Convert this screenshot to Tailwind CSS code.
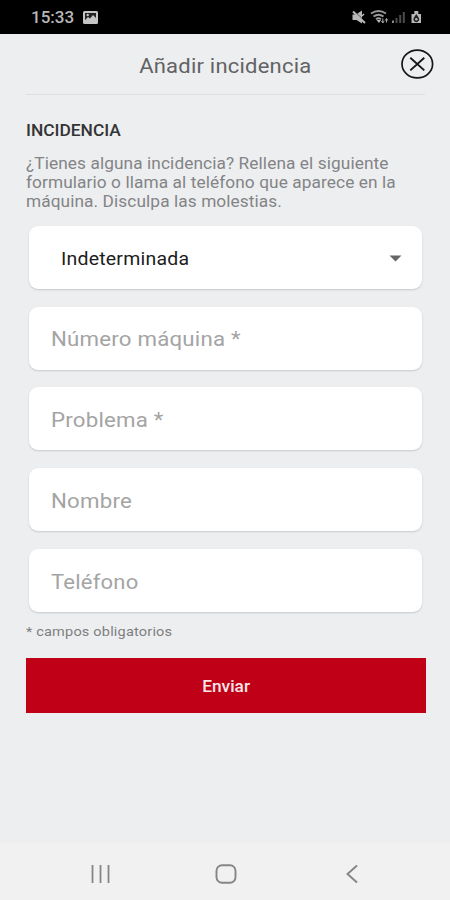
<!DOCTYPE html>
<html lang="es">
<head>
<meta charset="utf-8">
<title>Añadir incidencia</title>
<script src="https://cdn.jsdelivr.net/npm/@tailwindcss/browser@4"></script>
</head>
<body class="w-[450px] h-[900px] overflow-hidden bg-[#edeef0] font-['Roboto',sans-serif]">
<div class="flex h-[900px] flex-col">
  <header class="flex h-[34px] shrink-0 items-center bg-black pl-[31px] pr-[28px] text-[#b8b8b8]">
    <span class="w-[52px] text-[17px] leading-[20px] font-medium">15:33</span>
    <svg width="15" height="13" viewBox="0 0 15 13"><rect width="15" height="13" rx="1.5" fill="#c4c4c4"/><path d="M2 2h11v5l-3-3-3 3.500L5 6 2 9z" fill="#222"/><circle cx="4.700" cy="4" r="1.200" fill="#c4c4c4"/></svg>
    <svg class="ml-auto" width="71" height="16" viewBox="0 0 71 16" fill="#b8b8b8">
      <path d="M1.500 5.500H5l6-4v13L5.500 11h-4z"/><path d="M2.500 1.500 14 12.500" stroke="#000" stroke-width="1"/><path d="M2 2.500 14 14" stroke="#b8b8b8" stroke-width="2"/><path d="m11 7 2-2" stroke="#b8b8b8" stroke-width="1.500"/>
      <path d="M20 4.500q7.500-5 15 0M22.500 7.500q5-3.500 10 0M25 10.200q2.500-2 5 0" fill="none" stroke="#9a9a9a" stroke-width="1.800"/><path d="m25.500 11 2.500 3 2-3z"/><path d="M31.800 9.500v4M30.500 12l1.300 2 1.300-2M35.500 13.500v-3.500M34.200 11.500l1.300-2 1.300 2" stroke="#aaa" fill="none"/>
      <path d="M41 11.500h2v2.500h-2z" fill="#888"/><path d="M44.500 9h2v5h-2zM48.200 6h2v8h-2zM51.800 3h2v11h-2z" fill="#4c4c4c"/>
      <path d="M60.500 5h2.800V2h4v3H70v9h-9.500z"/><path d="m65.300 5-2.600 4a2.900 2.900 0 1 0 5.200 0z" fill="#222"/><circle cx="65.300" cy="10.200" r="1.200" fill="#b8b8b8"/>
    </svg>
  </header>
  <main class="flex flex-1 flex-col pl-[26px] pr-[25px]">
    <div class="relative flex h-[60.500px] items-center justify-center border-b border-[#dedfe1] pt-[4px]">
      <h1 class="scale-x-[1.100] text-[20px] leading-[24px] tracking-[0.200px] text-[#626264]">Añadir incidencia</h1>
      <svg class="absolute top-[14px] right-[-9px]" width="34" height="32" viewBox="0 0 34 32" fill="none" stroke="#161616" stroke-width="1.700"><ellipse cx="17.300" cy="16" rx="15.300" ry="13.900"/><path d="m10.300 9.800 14 12.600m0-12.600-14 12.600" stroke-width="1.900"/></svg>
    </div>
    <h2 class="mt-[26px] origin-left scale-x-[1.085] text-[16px] leading-[19px] font-medium text-[#343436]">INCIDENCIA</h2>
    <p class="mt-[14px] origin-left scale-x-[1.078] text-[16px] leading-[19px] tracking-[0.090px] whitespace-nowrap text-[#838486]">¿Tienes alguna incidencia? Rellena el siguiente<br>formulario o llama al teléfono que aparece en la<br>máquina. Disculpa las molestias.</p>
    <form class="mx-[3px] mt-[15.500px] flex flex-col gap-[17.700px] text-[20.500px] tracking-[0.200px] text-[#a4a4a4]">
      <div class="flex h-[63px] items-center justify-between rounded-[9px] bg-white pt-px pr-[20px] pl-[31.500px] text-[18px] text-[#1c1c1c] shadow-[0_1px_2px_rgba(0,0,0,0.16)]"><span class="origin-left scale-x-[1.082]">Indeterminada</span><svg width="13" height="7" viewBox="0 0 13 7"><path d="M.500.500h12l-6 6z" fill="#666"/></svg></div>
      <div class="flex h-[63px] items-center rounded-[9px] bg-white pt-[3px] pl-[21.500px] shadow-[0_1px_2px_rgba(0,0,0,0.16)]"><span class="origin-left scale-x-[1.085]">Número máquina *</span></div>
      <div class="flex h-[63px] items-center rounded-[9px] bg-white pt-[3px] pl-[21.500px] shadow-[0_1px_2px_rgba(0,0,0,0.16)]"><span class="origin-left scale-x-[1.085]">Problema *</span></div>
      <div class="flex h-[63px] items-center rounded-[9px] bg-white pt-[4px] pl-[21.500px] shadow-[0_1px_2px_rgba(0,0,0,0.16)]"><span class="origin-left scale-x-[1.085]">Nombre</span></div>
      <div class="flex h-[63px] items-center rounded-[9px] bg-white pt-[4px] pl-[21.500px] shadow-[0_1px_2px_rgba(0,0,0,0.16)]"><span class="origin-left scale-x-[1.075]">Teléfono</span></div>
    </form>
    <p class="mt-[11px] origin-left scale-x-[1.075] text-[13.500px] leading-[16px] tracking-[0.180px] text-[#7e7f81]">* campos obligatorios</p>
    <button class="mt-[19px] h-[55px] w-[400px] -ml-[0.500px] bg-[#c00017] pt-[3px] pl-[2px] text-[16px] font-medium text-[#f8e6e8]"><span class="inline-block scale-x-[1.080]">Enviar</span></button>
  </main>
  <nav class="flex h-[57px] shrink-0 items-center bg-[#f1f1f1] pt-[4px] pl-[91px]">
    <svg width="19" height="20" viewBox="0 0 19 20" stroke="#858585" stroke-width="1.800"><path d="M1.500 1v18M9.500 1v18M17.500 1v18"/></svg>
    <svg class="ml-[105px]" width="22" height="20" viewBox="0 0 22 20" fill="none" stroke="#858585" stroke-width="1.900"><rect x="1.500" y="1.200" width="19" height="17.500" rx="5.500"/></svg>
    <svg class="ml-[109px]" width="12" height="20" viewBox="0 0 12 20" fill="none" stroke="#858585" stroke-width="1.900"><path d="M11 1.500 1.500 10l9.500 8.500"/></svg>
  </nav>
</div>
</body>
</html>
